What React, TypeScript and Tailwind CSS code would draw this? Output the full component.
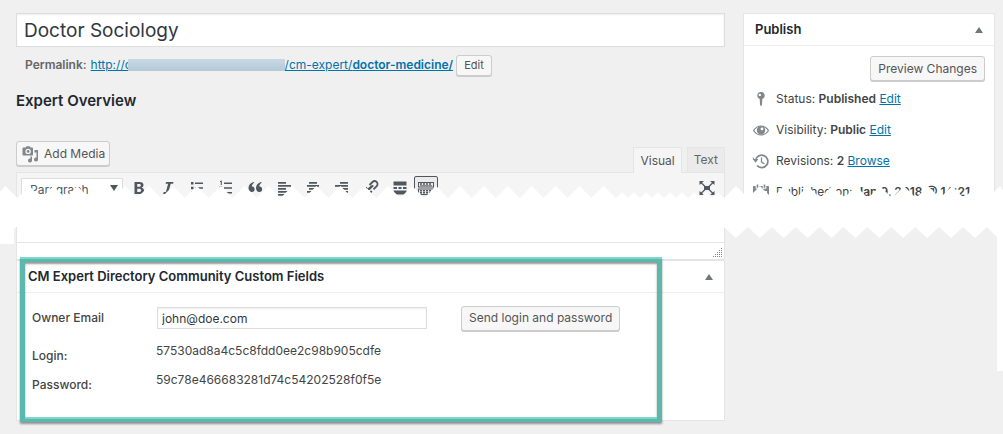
import React, { useState } from 'react';

// ---------- Torn strip ----------

const TOOTH = 24;

// Zigzag from x0 to x1, alternating between the two heights
function zigzag(x0: number, x1: number, step: number, first: number, second: number): string[] {
  const pts: string[] = [];
  for (let x = x0, i = 0; x <= x1; x += step, i++) {
    pts.push(`${x},${i % 2 === 0 ? first : second}`);
  }
  return pts;
}

const TORN_POINTS = [
  '0,6',
  ...zigzag(5.5, 604, (TOOTH - 0.08) / 2, 0, 12),
  ...zigzag(616, 718, 6, 12, 6),
  ...zigzag(724, 1003, TOOTH / 2, 12, 0),
  '1003,4',
  '1003,185',
  '997,185',
  '997,51',
  ...zigzag(724, 990, (TOOTH - 0.1) / 2, 41, 52).reverse(),
  '16,41',
  '14,43',
  '14,58',
  '0,58',
].join(' ');

function TornStrip() {
  return (
    <svg
      className="pointer-events-none absolute left-0 top-[186px] h-[185px] w-full"
      viewBox="0 0 1003 185"
      preserveAspectRatio="none"
      aria-hidden="true"
    >
      <polygon points={TORN_POINTS} fill="#fff" />
    </svg>
  );
}

// ---------- Icons ----------

function Icon({ children, className = 'size-5' }: { children: React.ReactNode; className?: string }) {
  return (
    <svg viewBox="0 0 20 20" fill="currentColor" className={`shrink-0 ${className}`} aria-hidden="true">
      {children}
    </svg>
  );
}

const MediaIcon = () => (
  <Icon className="size-5 text-[#82878c]">
    <path fillRule="evenodd" d="M3.500 3.500h1.200l.8-1.300h3.200l.8 1.300h1.500c.6 0 1 .4 1 1v6c0 .6-.4 1-1 1H2.500c-.6 0-1-.4-1-1v-6c0-.6.4-1 1-1zm3.600 1.200a2.700 2.700 0 1 0 0 5.400 2.700 2.700 0 0 0 0-5.400zm0 1.300a1.400 1.400 0 1 1 0 2.800 1.400 1.400 0 0 1 0-2.800z" />
    <path d="M13.500 6H17v9.500a2 2 0 1 1-1.500-1.900V8.500h-2z" />
    <path d="M9.500 12.500H11v4a2 2 0 1 1-1.500-1.900z" />
  </Icon>
);

const PinIcon = () => (
  <Icon>
    <path fillRule="evenodd" d="M10 3a3.600 3.600 0 0 1 1.300 7l-.3 5.500L10 17.500 9 15.500 8.700 10A3.600 3.600 0 0 1 10 3zM8.800 4.700a1.200 1.200 0 1 0 0 2.400 1.200 1.200 0 0 0 0-2.400z" />
  </Icon>
);

const EyeIcon = () => (
  <Icon>
    <path d="M2.500 10.500C4.500 7.500 7 6 10 6s5.500 1.500 7.500 4.500C15.500 13.500 13 15 10 15s-5.500-1.500-7.500-4.500z" fill="none" stroke="currentColor" strokeWidth="1.200" />
    <path fillRule="evenodd" d="M10 6a4.200 4.200 0 1 1 0 8.400A4.200 4.200 0 0 1 10 6zm1 1.500a1.400 1.400 0 1 0 0 2.800 1.400 1.400 0 0 0 0-2.800z" />
  </Icon>
);

const BackupIcon = () => (
  <Icon>
    <path d="M4.500 9.500a6.200 6.200 0 1 1 1.500 5" fill="none" stroke="currentColor" strokeWidth="1.700" />
    <path d="M1.800 8h5.600l-2.900 3.800zM1.800 5.500l2 3.500H2z" />
    <path d="M10.500 6.500V11l3 2" fill="none" stroke="currentColor" strokeWidth="1.300" />
  </Icon>
);

const CalendarIcon = () => (
  <Icon>
    <path fillRule="evenodd" d="M3 4h1.700v2.800h3.600V4h3.400v2.800h3.600V4H17c.6 0 1 .4 1 1v12H2V5c0-.6.400-1 1-1zm1 5v6.500h12V9z" />
    <path d="M5.700 2.500h1.600v3.300H5.700zM12.700 2.500h1.600v3.300h-1.600z" />
  </Icon>
);

const TOOLBAR_ICONS: { label: string; art: React.ReactNode }[] = [
  {
    label: 'Bold',
    art: <path fillRule="evenodd" d="M5.500 4h5c2.600 0 4 1.100 4 3.100 0 1.400-.8 2.300-2 2.600 1.600.3 2.500 1.300 2.500 2.900 0 2.200-1.600 3.400-4.300 3.400H5.500zm2.700 2v2.800h1.900c1.100 0 1.700-.5 1.700-1.400S11.200 6 10.100 6zm0 4.700V14h2.200c1.200 0 1.800-.6 1.800-1.700 0-1-.7-1.600-1.900-1.600z" />,
  },
  { label: 'Italic', art: <path d="M8 4h7.500l-.4 1.800h-2.400L10.500 14h2l-.4 1.900H5.200l.5-1.900h2.200l2.200-8.200H7.600z" /> },
  { label: 'Bulleted list', art: <path d="M4 4h2.500v2.500H4zM8 4.500h8V6H8zM4 8.800h2.500v2.500H4zM8 9.300h8v1.500H8zM4 13.500h2.500V16H4zM8 14h8v1.500H8z" /> },
  { label: 'Numbered list', art: <path d="M4 3l1.800-.5V7h-1V4H4zM8 4.500h8V6H8zM3.500 8.500H6v3H3.500zM8 9.300h8v1.500H8zM8 14h8v1.500H8zM3.500 13H6v3.500H3.500z" /> },
  {
    label: 'Blockquote',
    art: <path d="M9.300 4.500C7.600 5.700 6.800 7 6.800 8.500c1.700-.2 2.800 1 2.800 2.600a2.800 2.800 0 0 1-2.900 2.900c-2 0-3.200-1.500-3.200-3.900 0-2.900 1.900-5 5-6.100zM16.800 4.500c-1.700 1.200-2.500 2.500-2.500 4 1.700-.2 2.800 1 2.800 2.600a2.800 2.800 0 0 1-2.900 2.900c-2 0-3.200-1.500-3.200-3.900 0-2.900 1.900-5 5-6.100z" />,
  },
  { label: 'Align left', art: <path d="M4 4h8v1.700H4zM4 7h13v1.700H4zM4 10h8v1.700H4zM4 13h12v1.700H4zM4 16h8v1.700H4z" /> },
  { label: 'Align centre', art: <path d="M6 4h8v1.700H6zM4 7h12v1.700H4zM6 10h8v1.700H6zM4 13h12v1.700H4zM6 16h8v1.700H6z" /> },
  { label: 'Align right', art: <path d="M8 4h8v1.700H8zM3 7h13v1.700H3zM8 10h8v1.700H8zM4 13h12v1.700H4zM8 16h8v1.700H8z" /> },
  {
    label: 'Insert link',
    art: <path d="M8.200 11.300l4-4M8.500 7l3-3a2.900 2.900 0 0 1 4.200 4.100l-3.200 3.200M11 7.800L7 11.500M6 9.500l-2 2a2.900 2.900 0 0 0 4.200 4.100l2.600-2.600" fill="none" stroke="currentColor" strokeWidth="1.800" />,
  },
  { label: 'Read more', art: <path d="M3.500 3.500h13v4h-13zM3.500 9H7v2H3.500zM8.500 9h3v2h-3zM13 9h3.500v2H13zM3.500 12.500h13v4h-13z" /> },
];

const KitchenSinkIcon = () => (
  <Icon>
    <path fillRule="evenodd" d="M2 4h16v5.500H2zm1 1v3.500h14V5z" />
    <path d="M4 6h12" stroke="currentColor" strokeWidth="1.500" strokeDasharray="2 1" />
    <path d="M4 7.700h12" stroke="currentColor" strokeWidth=".8" />
    <path fillRule="evenodd" d="M2 10.500h16V17H2zm1 1V16h14v-4.500z" />
    <path d="M4 12.700h12M4 14.700h12" stroke="currentColor" strokeWidth="1.500" strokeDasharray="2 1" />
  </Icon>
);

const FullscreenIcon = () => (
  <Icon>
    <path d="M7 8h6v4H7z" />
    <path d="M2.500 3H7L2.500 7zM17.500 3H13l4.500 4zM2.500 17H7l-4.500-4zM17.500 17H13l4.500-4z" />
    <path d="M4 4.500L8 8.500M16 4.500l-4 4M4 15.500l4-4M16 15.500l-4-4" stroke="currentColor" strokeWidth="1.200" />
  </Icon>
);

const Triangle = ({ down = false }: { down?: boolean }) => (
  <svg viewBox="0 0 8 6" className="h-[6px] w-2 fill-current" aria-hidden="true">
    <path d={down ? 'M0 0h8L4 6z' : 'M0 6h8L4 0z'} />
  </svg>
);

// ---------- Shared bits ----------

function Button({ children, className = '' }: { children: React.ReactNode; className?: string }) {
  return (
    <button
      type="button"
      className={`flex items-center whitespace-nowrap rounded-[3px] border border-[#ccc] bg-[#f7f7f7] text-[#555] shadow-[0_1px_0_#ccc] ${className}`}
    >
      {children}
    </button>
  );
}

function Link({ children }: { children: React.ReactNode }) {
  return (
    <a href="#" className="text-[#0073aa] underline">
      {children}
    </a>
  );
}

function PanelHeader({ title, open, onToggle }: { title: string; open: boolean; onToggle: () => void }) {
  return (
    <div className="flex h-8 items-center justify-between border-b border-[#eee] px-[11px]">
      <h2 className="text-[13px] font-semibold text-[#23282d]">{title}</h2>
      <button type="button" aria-label={`Toggle ${title}`} onClick={onToggle} className="text-[#72777c]">
        <Triangle />
      </button>
    </div>
  );
}

function StatusRow({ icon, label, value, action }: { icon: React.ReactNode; label: string; value: string; action?: string }) {
  return (
    <li className="flex h-[31px] items-center gap-[5px] whitespace-nowrap">
      <span className="text-[#82878c]">{icon}</span>
      <span>
        {label} <b className="font-semibold">{value}</b> {action && <Link>{action}</Link>}
      </span>
    </li>
  );
}

// ---------- Page sections ----------

function Editor() {
  return (
    <section>
      <div className="flex items-end justify-between">
        <Button className="mb-[6px] h-[25px] gap-[3px] px-[4px] text-[12px]">
          <MediaIcon /> Add Media
        </Button>
        <div className="flex gap-[5px] text-[12px] text-[#555]">
          <button type="button" className="relative z-10 -mb-px h-[26px] border border-b-0 border-[#e5e5e5] bg-[#f5f5f5] px-[6px]">
            Visual
          </button>
          <button type="button" className="h-[25px] border border-b-0 border-[#e5e5e5] bg-[#ebebeb] px-[6px] text-[#666]">
            Text
          </button>
        </div>
      </div>
      <div className="border border-[#e5e5e5] bg-white">
        <div className="flex h-[34px] items-start bg-[#f5f5f5] px-1 pt-[3px] text-[#50575e]">
          <div className="relative mr-[6px]">
            <select
              aria-label="Format"
              className="h-6 w-[102px] appearance-none border border-[#ddd] bg-white px-2 text-[12px] text-[#50575e]"
            >
              <option>Paragraph</option>
            </select>
            <span className="pointer-events-none absolute right-[5px] top-[9px]">
              <Triangle down />
            </span>
          </div>
          <div className="flex gap-[9px] pt-[2px]">
            {TOOLBAR_ICONS.map((t) => (
              <button key={t.label} type="button" aria-label={t.label}>
                <Icon>{t.art}</Icon>
              </button>
            ))}
          </div>
          <button
            type="button"
            aria-label="Toolbar toggle"
            className="ml-1 flex size-6 items-center justify-center rounded-[2px] border border-[#50575e] bg-[#ebebeb]"
          >
            <KitchenSinkIcon />
          </button>
          <button type="button" aria-label="Fullscreen" className="ml-auto mr-[3px] mt-[2px]">
            <FullscreenIcon />
          </button>
        </div>
        <div className="h-[35px]" />
        <div className="flex h-[17px] items-end justify-end border-t border-[#e5e5e5] p-[2px] text-[#82878c]">
          <svg viewBox="0 0 9 9" className="size-[9px] fill-current" aria-hidden="true">
            <path d="M8 0h1v1H8zM6 2h1v1H6zM8 2h1v1H8zM4 4h1v1H4zM6 4h1v1H6zM8 4h1v1H8zM2 6h1v1H2zM4 6h1v1H4zM6 6h1v1H6zM8 6h1v1H8zM0 8h1v1H0zM2 8h1v1H2zM4 8h1v1H4zM6 8h1v1H6zM8 8h1v1H8z" />
          </svg>
        </div>
      </div>
    </section>
  );
}

function CustomFields() {
  const [open, setOpen] = useState(true);
  const [email, setEmail] = useState('john@doe.com');

  return (
    <section className="relative border border-[#e5e5e5] bg-white">
      <PanelHeader title="CM Expert Directory Community Custom Fields" open={open} onToggle={() => setOpen(!open)} />
      {open && (
        <div className="px-[15px] pb-[26px] pt-3 text-[12px] text-[#444]">
          <div className="flex h-[26px] items-center">
            <label htmlFor="owner-email" className="w-[125px] font-medium">
              Owner Email
            </label>
            <input
              id="owner-email"
              type="email"
              value={email}
              onChange={(e) => setEmail(e.target.value)}
              className="h-[22px] w-[270px] border border-[#ddd] bg-white px-1 text-[12px] text-[#32373c] shadow-[inset_0_1px_2px_rgba(0,0,0,0.07)]"
            />
            <Button className="ml-[34px] h-[25px] px-[7px]">Send login and password</Button>
          </div>
          <dl className="mt-[5px] grid grid-cols-[124px_1fr]">
            <dt className="flex h-[29px] items-end pb-[3px] font-medium leading-none">Login:</dt>
            <dd className="flex h-[29px] items-center">57530ad8a4c5c8fdd0ee2c98b905cdfe</dd>
            <dt className="flex h-[29px] items-end pb-[3px] font-medium leading-none">Password:</dt>
            <dd className="flex h-[29px] items-center">59c78e466683281d74c54202528f0f5e</dd>
          </dl>
        </div>
      )}
      {/* Callout frame laid over the panel */}
      <div className="pointer-events-none absolute -bottom-[2px] -top-1 left-[3px] right-[62px] border-[5px] border-[#5cb8ac] shadow-[0_2px_2px_rgba(0,0,0,0.4),inset_0_2px_2px_rgba(0,0,0,0.4)]">
        <div className="absolute -left-[5px] -right-[5px] -top-[5px] h-[2px] bg-[#7bd9cb]" />
        <div className="absolute -bottom-[2px] left-0 right-0 h-[2px] bg-[#7bd9cb]" />
      </div>
    </section>
  );
}

function Publish() {
  const [open, setOpen] = useState(true);

  return (
    <aside className="w-[252px] shrink-0">
      <section className="border border-[#e5e5e5] bg-white text-[12px] text-[#444]">
        <PanelHeader title="Publish" open={open} onToggle={() => setOpen(!open)} />
        {open && (
          <div className="px-[7px] pb-2 pt-[10px]">
            <div className="flex justify-end pr-[2px]">
              <Button className="h-[25px] px-[7px]">Preview Changes</Button>
            </div>
            <ul className="mt-[2px]">
              <StatusRow icon={<PinIcon />} label="Status:" value="Published" action="Edit" />
              <StatusRow icon={<EyeIcon />} label="Visibility:" value="Public" action="Edit" />
              <StatusRow icon={<BackupIcon />} label="Revisions:" value="2" action="Browse" />
              <StatusRow icon={<CalendarIcon />} label="Published on:" value="Jan 9, 2018 @ 14:21" />
            </ul>
          </div>
        )}
      </section>
    </aside>
  );
}

export default function App() {
  const [title, setTitle] = useState('Doctor Sociology');

  return (
    <div className="relative min-h-screen bg-[#f0f0f0] font-['Inter','Liberation_Sans',sans-serif]">
      <div className="flex items-start gap-[18px] pl-4 pr-2 pt-[13px]">
        <main className="min-w-0 flex-1">
          <input
            aria-label="Title"
            value={title}
            onChange={(e) => setTitle(e.target.value)}
            className="block h-[34px] w-full border border-[#ddd] bg-white px-[7px] text-[19px] text-[#32373c] shadow-[inset_0_1px_2px_rgba(0,0,0,0.07)]"
          />
          <div className="mt-[7px] flex h-[22px] items-center whitespace-nowrap pl-[9px] text-[12px] text-[#666]">
            <span className="mr-1 font-semibold">Permalink:</span>
            <a href="#" className="flex items-center text-[#0073aa] underline">
              http://c
              <span className="relative -ml-1 inline-block h-3 w-[157px] bg-linear-to-b from-[#c9d9e2] to-[#b3cad8]" />
              /cm-expert/<b className="font-semibold">doctor-medicine/</b>
            </a>
            <Button className="ml-[3px] h-[21px] px-[7px] text-[11px]">Edit</Button>
          </div>
          <h2 className="mb-[30px] mt-[15px] text-[15px] font-semibold leading-5 text-[#23282d]">Expert Overview</h2>
          <Editor />
          <CustomFields />
        </main>
        <Publish />
      </div>
      <TornStrip />
    </div>
  );
}
